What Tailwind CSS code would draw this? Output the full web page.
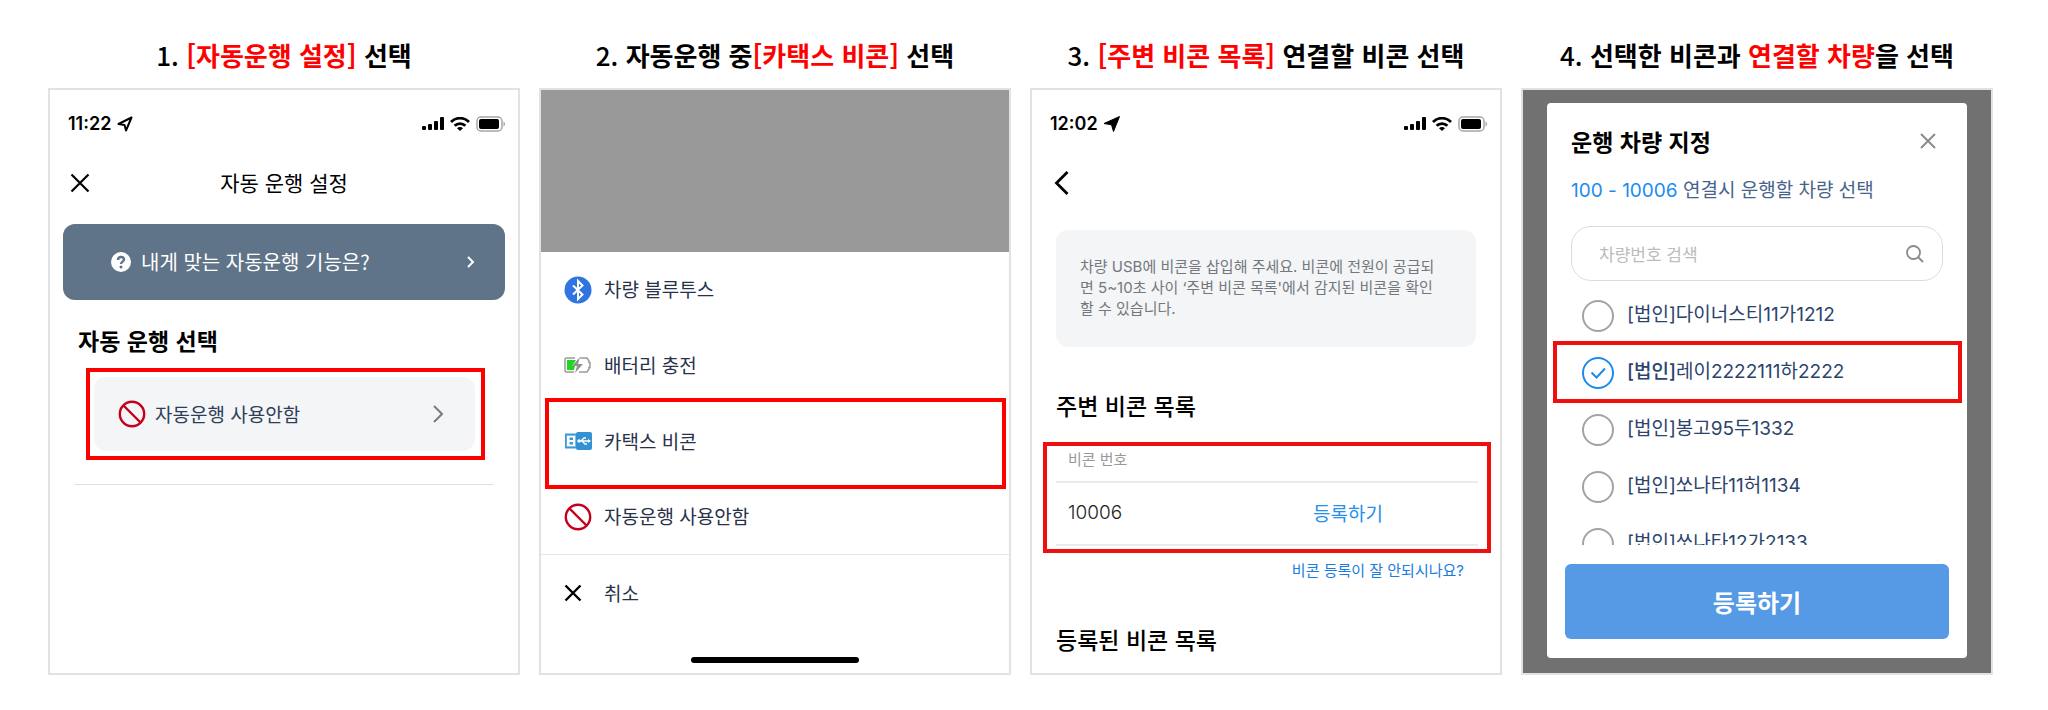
<!DOCTYPE html>
<html lang="ko">
<head>
  <meta charset="UTF-8" />
  <meta name="viewport" content="width=device-width, initial-scale=1.0" />
  <title>카택스 비콘 연결 가이드</title>
  <script src="https://cdn.jsdelivr.net/npm/@tailwindcss/browser@4"></script>
</head>
<body class="bg-white text-black font-['Noto_Sans_CJK_KR',sans-serif]">

<!-- 공용 아이콘 -->
<svg class="hidden">
  <symbol id="signal" viewBox="0 0 22 14">
    <rect x="0" y="9" width="4" height="4" rx="1" /><rect x="6" y="7" width="4" height="6" rx="1" />
    <rect x="12" y="4" width="4" height="9" rx="1" /><rect x="18" y="0" width="4" height="13" rx="1" />
  </symbol>
  <symbol id="wifi" viewBox="0 0 20 14">
    <path d="M1 5a12.500 12.500 0 0 1 18 0M4.600 8.800a7.600 7.600 0 0 1 10.800 0" fill="none" stroke="currentColor" stroke-width="2.800" />
    <path d="M10 14l-3-2.800a4.200 4.200 0 0 1 6 0z" />
  </symbol>
  <symbol id="battery" viewBox="0 0 30 16">
    <rect x="1" y="1" width="25" height="14" rx="4" fill="none" stroke="#a6a6a6" stroke-width="1.500" />
    <rect x="3" y="3" width="20" height="10" rx="2" />
    <path d="M27.500 5.500c2 .8 2 4.200 0 5z" fill="#a6a6a6" />
  </symbol>
  <symbol id="ban" viewBox="0 0 28 28">
    <circle cx="14" cy="14" r="12.200" fill="none" stroke="#c4001d" stroke-width="2.400" />
    <path d="M5.500 5.500l17 17" stroke="#c4001d" stroke-width="2.400" />
  </symbol>
</svg>

<main class="grid grid-cols-4 gap-[19px] pt-[35px] pb-8 pl-12 pr-[55px]">

  <!-- 1단계 -->
  <section class="flex flex-col">
    <h2 class="mb-[13px] text-center text-[26px] leading-10 font-bold whitespace-pre"><span class="font-medium">1. </span><span class="text-[#f00]">[자동운행 설정]</span> 선택</h2>
    <div class="flex-1 border-2 border-[#e2e2e2]">
      <div class="flex items-center pt-5 pl-[18px] pr-3">
        <span class="font-['Inter',sans-serif] text-lg font-semibold">11:22</span>
        <svg class="ml-[6px] size-4" viewBox="0 0 16 16" fill="none" stroke="currentColor" stroke-width="2" stroke-linejoin="round"><path d="M14.500 1.500L1.500 8l6 1 1.500 5.500z" /></svg>
        <div class="ml-auto flex items-center gap-[6px]">
          <svg class="h-[14px] w-[22px]"><use href="#signal" /></svg>
          <svg class="h-[14px] w-5"><use href="#wifi" /></svg>
          <svg class="h-4 w-[30px]"><use href="#battery" /></svg>
        </div>
      </div>
      <header class="mt-[21px] grid h-12 grid-cols-[20px_1fr_20px] items-center px-5">
        <button aria-label="닫기"><svg class="size-5" viewBox="0 0 20 20" stroke="currentColor" stroke-width="2.200"><path d="M1.500 1.500l17 17M18.500 1.500l-17 17" /></svg></button>
        <h3 class="text-center text-[21px]">자동 운행 설정</h3>
      </header>
      <a href="#guide" class="mx-[13px] mt-[17px] flex h-[76px] items-center rounded-xl bg-[#5f7389] pl-12 pr-[30px] text-xl text-white">
        <svg class="mr-[10px] size-5" viewBox="0 0 20 20"><circle cx="10" cy="10" r="10" fill="#fff" /><path d="M7 8c0-4 6-4 6-.5 0 2-3 2.200-3 4.500" fill="none" stroke="#5f7389" stroke-width="2.400" /><circle cx="10" cy="15" r="1.500" fill="#5f7389" /></svg>
        내게 맞는 자동운행 기능은?
        <svg class="ml-auto h-3 w-2" viewBox="0 0 8 12" fill="none" stroke="#fff" stroke-width="2"><path d="M1 1l5 5-5 5" /></svg>
      </a>
      <h3 class="mt-[22px] ml-7 text-[23px] leading-9 font-bold">자동 운행 선택</h3>
      <div class="mt-[10px] ml-9 mr-[33px] border-4 border-[#f00] py-[5px] pl-1 pr-[6px]">
        <button class="flex h-[74px] w-full items-center rounded-xl bg-[#f3f5f7] pl-6 pr-8 text-[19px] text-[#2f3e57]">
          <svg class="mr-[9px] size-7"><use href="#ban" /></svg>
          자동운행 사용안함
          <svg class="ml-auto h-[18px] w-[10px]" viewBox="0 0 10 18" fill="none" stroke="#7c7c80" stroke-width="2"><path d="M1 1l8 8-8 8" /></svg>
        </button>
      </div>
      <hr class="mt-6 mx-6 border-[#e2e2e2]" />
    </div>
  </section>

  <!-- 2단계 -->
  <section class="flex flex-col">
    <h2 class="mb-[13px] text-center text-[26px] leading-10 font-bold whitespace-pre"><span class="font-medium">2. </span>자동운행 중<span class="text-[#f00]">[카택스 비콘]</span> 선택</h2>
    <div class="flex flex-1 flex-col border-2 border-[#e2e2e2] text-[19px] text-[#27324a]">
      <div class="h-[162px] bg-[#999]"></div>
      <button class="flex h-[75px] items-center gap-3 pl-[23px]">
        <svg class="size-7" viewBox="0 0 28 28"><circle cx="14" cy="14" r="13.500" fill="#2f74e0" /><path d="M9 9.500l9.500 9-4.500 4.500V5l4.500 4.500-9.500 9" fill="none" stroke="#fff" stroke-width="2" /></svg>
        차량 블루투스
      </button>
      <button class="flex h-[76px] items-center gap-3 pl-[23px]">
        <svg class="size-7" viewBox="0 0 28 28"><path d="M11 7H2.500Q1 7 1 8.500v11Q1 21 2.500 21H10M16 7h7l2 3v1.500h1v5h-1V18l-2 3h-8" fill="none" stroke="#9b9b9b" stroke-width="1.500" /><path d="M3 9h9l-4 6h3l-1 4H3z" fill="#1fd51f" /><path d="M16 6L8 15h5l-2 7 8-9h-5z" fill="#929292" /></svg>
        배터리 충전
      </button>
      <div class="relative">
        <button class="flex h-[76px] w-full items-center gap-3 pl-[23px]">
          <svg class="size-7" viewBox="0 0 28 28"><path d="M1 6.500h13v15H1z" fill="#3b9ad8" /><path d="M2.500 8h11v12h-11z" fill="#fff" opacity=".35" /><path d="M3 9h8v10H3z" fill="#fff" /><path d="M5.500 10.500h3.500v2.500H5.500zM5.500 15h3.500v2.500H5.500z" fill="#3b9ad8" /><rect x="12" y="5" width="16" height="18" rx="2" fill="#3492d2" /><path d="M14 14h12M17 14l3-3h2M18 14l3 3h2" fill="none" stroke="#fff" stroke-width="1.300" /><circle cx="15" cy="14" r="1.700" fill="#fff" /><path d="M24 12l3 2-3 2z" fill="#fff" /></svg>
          카택스 비콘
        </button>
        <div class="pointer-events-none absolute -top-[5px] -bottom-[10px] left-1 right-[3px] border-4 border-[#f00]"></div>
      </div>
      <button class="flex h-[76px] items-center gap-3 border-b border-[#e6e6e6] pl-[23px]">
        <svg class="size-7"><use href="#ban" /></svg>
        자동운행 사용안함
      </button>
      <button class="flex h-[76px] items-center gap-3 pl-[23px]">
        <span class="w-7"><svg class="size-[18px]" viewBox="0 0 18 18" stroke="#000" stroke-width="2.400"><path d="M1.500 1.500l15 15M16.500 1.500l-15 15" /></svg></span>
        취소
      </button>
      <div class="mx-auto mt-auto mb-[10px] h-[6px] w-[168px] rounded-full bg-black"></div>
    </div>
  </section>

  <!-- 3단계 -->
  <section class="flex flex-col">
    <h2 class="mb-[13px] text-center text-[26px] leading-10 font-bold whitespace-pre"><span class="font-medium">3. </span><span class="text-[#f00]">[주변 비콘 목록]</span> 연결할 비콘 선택</h2>
    <div class="flex-1 border-2 border-[#e2e2e2]">
      <div class="flex items-center pt-5 pl-[18px] pr-3">
        <span class="font-['Inter',sans-serif] text-lg font-semibold">12:02</span>
        <svg class="ml-[6px] size-4" viewBox="0 0 16 16" fill="currentColor"><path d="M15.500.500L0 7.500l7.500 1.300L9.500 15.500z" stroke="currentColor" /></svg>
        <div class="ml-auto flex items-center gap-[6px]">
          <svg class="h-[14px] w-[22px]"><use href="#signal" /></svg>
          <svg class="h-[14px] w-5"><use href="#wifi" /></svg>
          <svg class="h-4 w-[30px]"><use href="#battery" /></svg>
        </div>
      </div>
      <header class="mt-[21px] flex h-12 items-center pl-[22px]">
        <button aria-label="뒤로"><svg class="h-6 w-[15px]" viewBox="0 0 15 24" fill="none" stroke="currentColor" stroke-width="2.800"><path d="M13.500 1L2.500 12l11 11" /></svg></button>
      </header>
      <p class="mx-6 mt-[23px] rounded-xl bg-[#f3f5f7] pt-[26px] pb-7 pl-6 font-['Inter','Noto_Sans_CJK_KR',sans-serif] text-[15px] leading-[21px] whitespace-nowrap text-[#74787e]">차량 USB에 비콘을 삽입해 주세요. 비콘에 전원이 공급되<br />면 5~10초 사이 ‘주변 비콘 목록'에서 감지된 비콘을 확인<br />할 수 있습니다.</p>
      <h3 class="mt-10 ml-6 text-[23px] leading-9 font-medium">주변 비콘 목록</h3>
      <div class="mt-[19px] ml-[11px] mr-[9px] border-4 border-[#ee0f0f] px-[9px]">
        <table class="w-full text-left">
          <thead>
            <tr class="h-9 border-b-2 border-[#ebebeb] text-[15px] leading-5 text-[#999]">
              <th class="pb-[10px] pl-3 font-normal" colspan="2">비콘 번호</th>
            </tr>
          </thead>
          <tbody>
            <tr class="h-[63px] border-b-2 border-[#ebebeb] text-[19px]">
              <td class="pl-3 font-['Inter',sans-serif] font-light text-[#222]">10006</td>
              <td class="w-[165px]"><button class="text-[#2490ec]">등록하기</button></td>
            </tr>
          </tbody>
        </table>
        <div class="h-[3px]"></div>
      </div>
      <div class="mt-[3px] mr-9 text-right leading-[26px]"><a href="#help" class="font-['Inter','Noto_Sans_CJK_KR',sans-serif] text-[15px] text-[#1a7ce0]">비콘 등록이 잘 안되시나요?</a></div>
      <h3 class="mt-[37px] ml-6 text-[23px] leading-9 font-medium">등록된 비콘 목록</h3>
    </div>
  </section>

  <!-- 4단계 -->
  <section class="flex flex-col">
    <h2 class="mb-[13px] text-center text-[26px] leading-10 font-bold whitespace-pre"><span class="font-medium">4. </span>선택한 비콘과 <span class="text-[#f00]">연결할 차량</span>을 선택</h2>
    <div class="flex-1 border-2 border-[#e2e2e2] bg-[#717171] px-6 pt-[13px] pb-[15px]">
      <form class="rounded bg-white pt-5 pb-[19px] text-[19px] text-[#2c446c]">
        <div class="flex items-center justify-between pl-6 pr-[31px]">
          <h3 class="text-[23px] leading-9 font-bold text-black">운행 차량 지정</h3>
          <button type="button" aria-label="닫기"><svg class="size-4" viewBox="0 0 16 16" stroke="#8b8b8b" stroke-width="2"><path d="M1 1l14 14M15 1L1 15" /></svg></button>
        </div>
        <p class="mt-4 pl-6 leading-7 text-[#466489]"><span class="font-['Inter',sans-serif] text-[#1a8cf0]">100 - 10006</span> 연결시 운행할 차량 선택</p>
        <div class="mx-6 mt-[21px] flex h-[55px] items-center rounded-[20px] border border-[#dcdcdc] pl-[27px] pr-[18px]">
          <input type="text" aria-label="차량번호 검색" placeholder="차량번호 검색" class="min-w-0 flex-1 text-[17px] outline-none placeholder:text-[#bcbcbc]" />
          <svg class="size-[18px]" viewBox="0 0 18 18" fill="none" stroke="#8b8b8b" stroke-width="1.800"><circle cx="7.500" cy="7.500" r="6.500" /><path d="M12 12l5 5" /></svg>
        </div>
        <div class="mt-[6px] h-[258px] overflow-hidden font-['Inter','Noto_Sans_CJK_KR',sans-serif] whitespace-nowrap">
          <label class="flex h-[57px] items-center gap-[13px] pl-[35px]">
            <input type="radio" name="car" class="size-8 appearance-none rounded-full border-2 border-[#a3a3a3]" />
            [법인]다이너스티11가1212
          </label>
          <label class="relative flex h-[57px] items-center gap-[13px] pl-[35px]">
            <input type="radio" name="car" checked class="size-8 appearance-none rounded-full border-2 border-[#1a8cf0]" />
            <svg class="absolute left-[43px] h-4 w-4" viewBox="0 0 16 16" fill="none" stroke="#1a8cf0" stroke-width="2"><path d="M1.500 7.500L6.500 12.500l8.500-9" /></svg>
            <span><span class="font-medium">[법인]</span>레이2222111하2222</span>
            <span class="pointer-events-none absolute -top-[3px] -bottom-[2px] left-[6px] right-[5px] border-4 border-[#ee0f0f]"></span>
          </label>
          <label class="flex h-[57px] items-center gap-[13px] pl-[35px]">
            <input type="radio" name="car" class="size-8 appearance-none rounded-full border-2 border-[#a3a3a3]" />
            [법인]봉고95두1332
          </label>
          <label class="flex h-[57px] items-center gap-[13px] pl-[35px]">
            <input type="radio" name="car" class="size-8 appearance-none rounded-full border-2 border-[#a3a3a3]" />
            [법인]쏘나타11허1134
          </label>
          <label class="flex h-[57px] items-center gap-[13px] pl-[35px]">
            <input type="radio" name="car" class="size-8 appearance-none rounded-full border-2 border-[#a3a3a3]" />
            [법인]쏘나타12가2133
          </label>
        </div>
        <div class="mt-[19px] px-[18px]">
          <button type="button" class="h-[75px] w-full rounded-md bg-[#5699e4] text-2xl font-bold text-white">등록하기</button>
        </div>
      </form>
    </div>
  </section>

</main>
</body>
</html>
